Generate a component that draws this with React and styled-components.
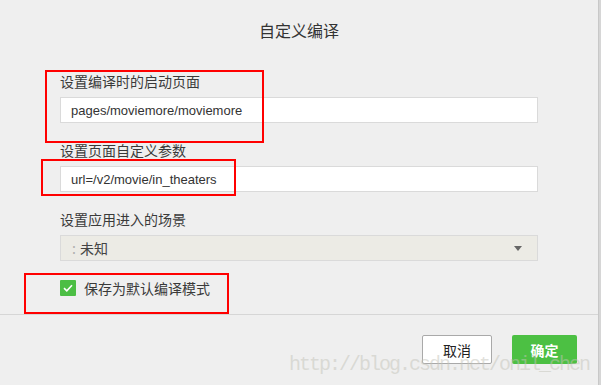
import React from "react";
import styled, { createGlobalStyle } from "styled-components";

const GlobalStyle = createGlobalStyle`
  html, body {
    margin: 0;
    padding: 0;
    background: #efefef;
    overflow: hidden;
  }
  * {
    box-sizing: border-box;
  }
`;

const Page = styled.div`
  position: relative;
  width: 601px;
  height: 385px;
  display: flex;
  background: #efefef;
  font-family: "Liberation Sans", "Noto Sans CJK SC", sans-serif;
`;

const Dialog = styled.div`
  width: 598px;
  height: 100%;
  display: flex;
  flex-direction: column;
`;

const EdgeStrip = styled.div`
  width: 3px;
  height: 100%;
  background: #d6d6d6;
  border-left: 1px solid #c8c8c8;
`;

const Header = styled.div`
  height: 71px;
  padding-top: 20px;
  text-align: center;
`;

const Title = styled.h1`
  margin: 0;
  font-size: 16px;
  line-height: 20px;
  font-weight: normal;
  color: #333;
  font-family: "Noto Sans CJK SC", sans-serif;
`;

const Body = styled.div`
  padding: 0 60px 0 60px;
  height: 244px;
  border-bottom: 1px solid #d6d6d6;
  display: flex;
  flex-direction: column;
`;

const Field = styled.div`
  display: flex;
  flex-direction: column;
  margin-bottom: 17px;
`;

const Label = styled.label`
  font-family: "Noto Sans CJK SC", sans-serif;
  font-size: 14px;
  line-height: 20px;
  color: #3a3a3a;
  margin-bottom: 6px;
`;

const TextInput = styled.div`
  height: 26px;
  background: #fff;
  border: 1px solid #dadada;
  padding: 0 10px;
  display: flex;
  align-items: center;
  font-size: 13px;
  color: #333;
`;

const Select = styled.div`
  height: 26px;
  background: #ecebe5;
  border: 1px solid #dadada;
  padding: 0 0 0 11px;
  display: flex;
  align-items: center;
  font-family: "Noto Sans CJK SC", sans-serif;
  font-size: 14px;
  color: #444;
`;

const Colon = styled.span`
  color: #b0b0b0;
  margin-right: 4px;
`;

const SelectValue = styled.span`
  flex: 1;
`;

const Arrow = styled.span`
  width: 0;
  height: 0;
  margin-right: 15px;
  border-left: 4px solid transparent;
  border-right: 4px solid transparent;
  border-top: 5px solid #666;
`;

const CheckRow = styled.div`
  display: flex;
  align-items: center;
  gap: 8px;
  margin-top: 2px;
  height: 16px;
`;

const CheckBox = styled.span`
  width: 16px;
  height: 16px;
  background: #4cbe44;
  border-radius: 1px;
  display: flex;
  align-items: center;
  justify-content: center;
`;

const CheckText = styled.span`
  font-family: "Noto Sans CJK SC", sans-serif;
  font-size: 14px;
  color: #3a3a3a;
`;

const Footer = styled.div`
  display: flex;
  justify-content: flex-end;
  gap: 20px;
  padding: 20px 21px 0 0;
`;

const Button = styled.button`
  height: 29px;
  width: ${(p) => (p.$primary ? "65px" : "70px")};
  border-radius: 2px;
  border: ${(p) => (p.$primary ? "none" : "1px solid #a9a9a9")};
  background: ${(p) => (p.$primary ? "#4cc043" : "#fff")};
  color: ${(p) => (p.$primary ? "#fff" : "#222")};
  font-family: "Noto Sans CJK SC", sans-serif;
  font-size: 14px;
  font-weight: ${(p) => (p.$primary ? "bold" : "normal")};
  padding: 0;
`;

const Mark = styled.div`
  position: absolute;
  left: ${(p) => p.$x}px;
  top: ${(p) => p.$y}px;
  width: ${(p) => p.$w}px;
  height: ${(p) => p.$h}px;
  border: 2px solid #f00;
  pointer-events: none;
`;

const Watermark = styled.div`
  position: absolute;
  left: 289px;
  top: 354px;
  font-family: "Liberation Mono", monospace;
  font-size: 20px;
  letter-spacing: -2px;
  line-height: 22px;
  color: rgba(195, 195, 185, 0.5);
  pointer-events: none;
`;

export default function App() {
  return (
    <>
      <GlobalStyle />
      <Page>
        <Dialog>
          <Header>
            <Title>自定义编译</Title>
          </Header>
          <Body>
            <Field>
              <Label>设置编译时的启动页面</Label>
              <TextInput>pages/moviemore/moviemore</TextInput>
            </Field>
            <Field>
              <Label>设置页面自定义参数</Label>
              <TextInput>url=/v2/movie/in_theaters</TextInput>
            </Field>
            <Field>
              <Label>设置应用进入的场景</Label>
              <Select>
                <Colon>:</Colon>
                <SelectValue>未知</SelectValue>
                <Arrow />
              </Select>
            </Field>
            <CheckRow>
              <CheckBox>
                <svg width="10" height="8" viewBox="0 0 10 8">
                  <path d="M1 4.2 L3.8 6.8 L9 1.2" stroke="#fff" strokeWidth="1.6" fill="none" />
                </svg>
              </CheckBox>
              <CheckText>保存为默认编译模式</CheckText>
            </CheckRow>
          </Body>
          <Footer>
            <Button>取消</Button>
            <Button $primary>确定</Button>
          </Footer>
        </Dialog>
        <EdgeStrip />
        <Mark $x={45} $y={70} $w={219} $h={73} />
        <Mark $x={41} $y={159} $w={195} $h={37} />
        <Mark $x={24} $y={273} $w={205} $h={41} />
        <Watermark>http://blog.csdn.net/onil_chen</Watermark>
      </Page>
    </>
  );
}
